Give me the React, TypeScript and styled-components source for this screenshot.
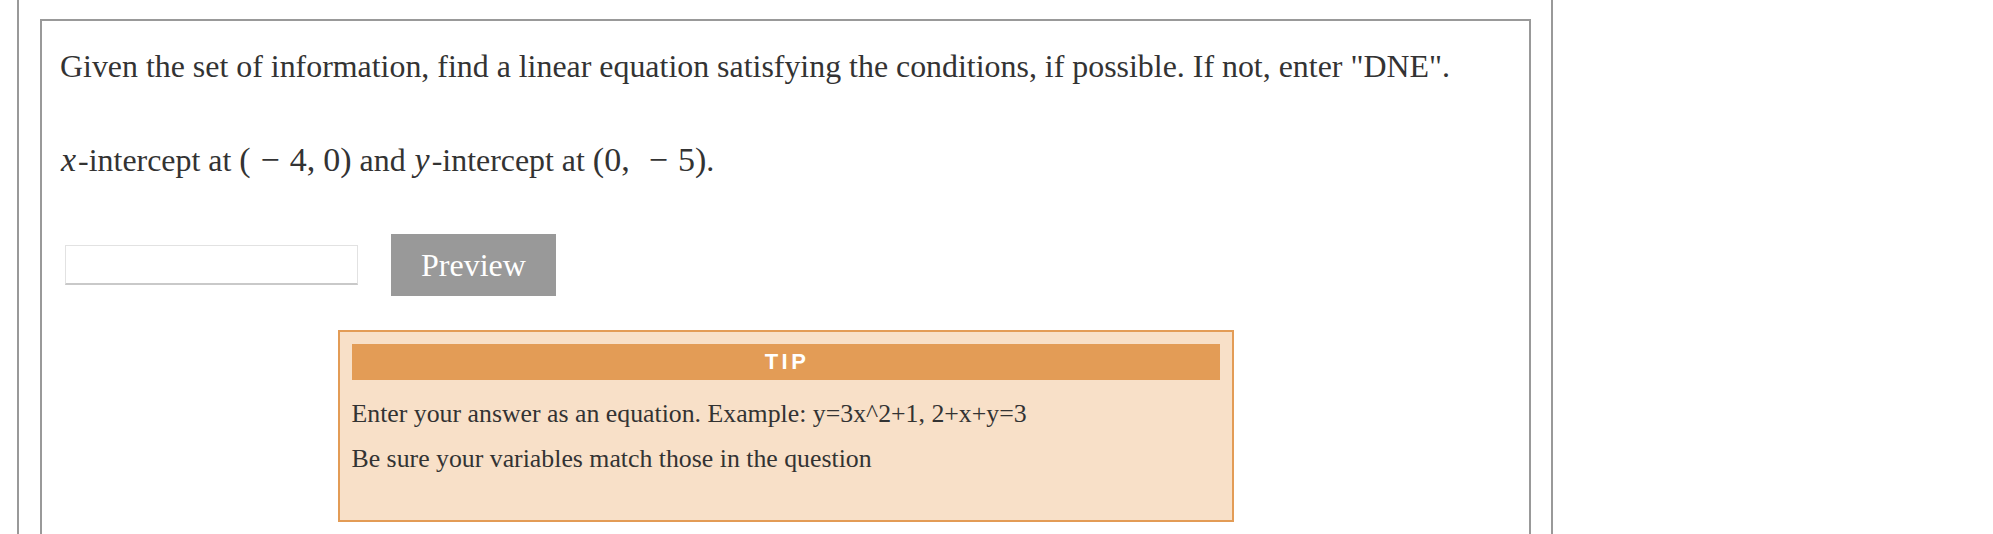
import React from "react"
import styled, { createGlobalStyle } from "styled-components"

const GlobalStyle = createGlobalStyle`
  html, body {
    margin: 0;
    padding: 0;
    background: #fff;
  }
  body {
    font-family: "Liberation Serif", "Times New Roman", serif;
    color: #333;
    overflow: hidden;
  }
`

const colors = {
  frame: "#999999",
  tip: "#e39c56",
  tipBg: "#f8e0c8",
  text: "#333333",
}

export default function App() {
  return (
    <>
      <GlobalStyle />
      <Frame>
        <Card>
          <Question>
            Given the set of information, find a linear equation satisfying the
            conditions, if possible. If not, enter "DNE".
          </Question>
          <MathLine>
            <MathVar>x</MathVar>-intercept at{" "}
            <MathExpr>
              (<Op>−</Op>4,<Gap />0)
            </MathExpr>{" "}
            and <MathVar>y</MathVar>-intercept at{" "}
            <MathExpr>
              (0,<Gap wide />
              <Op>−</Op>5)
            </MathExpr>
            .
          </MathLine>
          <AnswerRow>
            <AnswerInput type="text" aria-label="answer" />
            <PreviewButton type="button">Preview</PreviewButton>
          </AnswerRow>
          <Tip>
            <TipHeader>TIP</TipHeader>
            <TipText>
              Enter your answer as an equation. Example: y=3x^2+1, 2+x+y=3
            </TipText>
            <TipText>Be sure your variables match those in the question</TipText>
          </Tip>
        </Card>
      </Frame>
    </>
  )
}

const Frame = styled.div`
  margin-left: 17px;
  width: 1536px;
  height: 534px;
  box-sizing: border-box;
  border-left: 2px solid ${colors.frame};
  border-right: 2px solid ${colors.frame};
  padding: 19px 20px 0 21px;
  overflow: hidden;
`

const Card = styled.div`
  height: 100%;
  box-sizing: border-box;
  border: 2px solid ${colors.frame};
  border-bottom: none;
  padding: 28px 18px 0;
`

const Question = styled.p`
  margin: 0;
  font-size: 31.9px;
  line-height: 36px;
  color: ${colors.text};
`

const MathLine = styled(Question)`
  margin-top: 57px;
`

const MathVar = styled.span`
  font-style: italic;
  font-size: 34px;
  margin: 0 2px 0 1px;
`

const MathExpr = styled.span`
  font-size: 34px;
`

const Op = styled.span`
  margin: 0 10px;
`

type GapProps = { wide?: boolean }

const Gap = styled.span<GapProps>`
  display: inline-block;
  width: ${({ wide }) => (wide ? "9px" : "8px")};
`

const AnswerRow = styled.div`
  display: flex;
  align-items: center;
  margin-top: 55px;
`

const AnswerInput = styled.input`
  margin: 0 0 0 5px;
  width: 293px;
  height: 40px;
  box-sizing: border-box;
  border: 1px solid #e2e2e2;
  border-bottom: 2px solid #c9c9c9;
  background: #fff;
  outline: none;
  padding: 0 8px;
  font-family: inherit;
  font-size: 24px;
`

const PreviewButton = styled.button`
  margin-left: 33px;
  width: 165px;
  height: 62px;
  border: none;
  background: #999999;
  color: #fff;
  font-family: "Liberation Serif", "Times New Roman", serif;
  font-size: 32px;
  padding: 0;
  cursor: pointer;
`

const Tip = styled.div`
  margin: 34px auto 0;
  width: 896px;
  box-sizing: border-box;
  border: 2px solid ${colors.tip};
  background: ${colors.tipBg};
  padding: 12px 12px 45px;
`

const TipHeader = styled.div`
  height: 36px;
  display: flex;
  align-items: center;
  justify-content: center;
  background: ${colors.tip};
  color: #fff;
  font-family: "Liberation Sans", Arial, sans-serif;
  font-weight: 700;
  font-size: 22px;
  letter-spacing: 3.5px;
  padding-left: 3px;
`

const TipText = styled.p`
  margin: 13px 0 0;
  font-size: 25.8px;
  line-height: 32px;
  color: ${colors.text};

  &:first-of-type {
    margin-top: 18px;
  }
`
